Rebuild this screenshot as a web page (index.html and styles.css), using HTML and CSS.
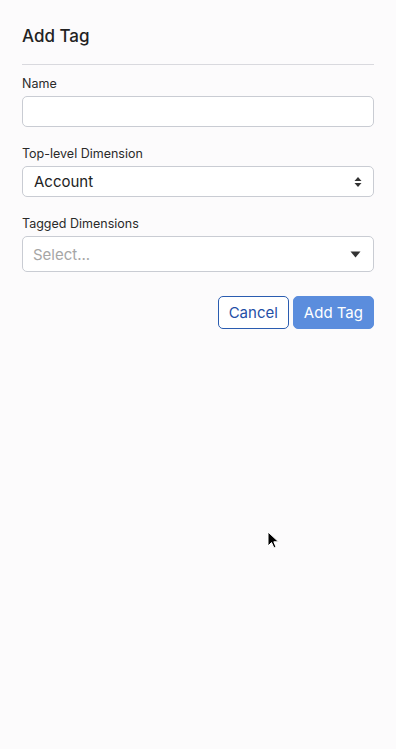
FILE: index.html
```html
<!DOCTYPE html>
<html lang="en">
<head>
    <meta charset="UTF-8">
    <meta name="viewport" content="width=device-width, initial-scale=1.0">
    <title>Add Tag</title>
    <link rel="stylesheet" href="styles.css">
</head>
<body>
    <div class="modal">
        <h2 class="modal-title">Add Tag</h2>

        <div class="field">
            <label class="field-label">Name</label>
            <input class="text-input" type="text">
        </div>

        <div class="field">
            <label class="field-label">Top-level Dimension</label>
            <div class="select-box">
                <span class="select-value">Account</span>
                <svg class="select-arrows" width="8" height="12" viewBox="0 0 8 12">
                    <path d="M4 1 L7.5 5 H0.5 Z" fill="#333"/>
                    <path d="M4 11 L7.5 7 H0.5 Z" fill="#333"/>
                </svg>
            </div>
        </div>

        <div class="field last">
            <label class="field-label">Tagged Dimensions</label>
            <div class="select-box multi">
                <span class="select-placeholder">Select...</span>
                <svg class="select-caret" width="11" height="7" viewBox="0 0 11 7">
                    <path d="M0.5 0.5 H10.5 L5.5 6.5 Z" fill="#333"/>
                </svg>
            </div>
        </div>

        <div class="actions">
            <button class="btn btn-outline">Cancel</button>
            <button class="btn btn-primary">Add Tag</button>
        </div>
    </div>

    <!-- mouse pointer -->
    <svg class="cursor" width="14" height="20" viewBox="0 0 14 20">
        <path d="M1 1 L1 15 L4.5 11.5 L7 17 L9 16 L6.8 10.8 L11.5 10.8 Z" fill="#000" stroke="#fff" stroke-width="1"/>
    </svg>
</body>
</html>
```

FILE: styles.css
```css
* {
    box-sizing: border-box;
    margin: 0;
    padding: 0;
}

body {
    font-family: Inter, 'Noto Sans', sans-serif;
    background: #fcfbfc;
    color: #222;
    min-height: 100vh;
    position: relative;
}

.modal {
    padding: 24px 22px 0 22px;
}

.modal-title {
    font-size: 17px;
    font-weight: 500;
    line-height: 24px;
    color: #222;
    padding-bottom: 16px;
    border-bottom: 1px solid #d9d9de;
    margin-bottom: 11px;
}

.field {
    margin-bottom: 19px;
}

.field.last {
    margin-bottom: 24px;
}

.field-label {
    display: block;
    font-size: 12.5px;
    line-height: 16px;
    color: #2a2a2a;
    margin-bottom: 4px;
}

.text-input {
    display: block;
    width: 100%;
    height: 31px;
    border: 1px solid #c9ccd3;
    border-radius: 5px;
    background: #fff;
    outline: none;
}

.select-box {
    display: flex;
    align-items: center;
    justify-content: space-between;
    height: 31px;
    padding: 0 11px;
    border: 1px solid #c9ccd3;
    border-radius: 5px;
    background: #fff;
}

.select-box.multi {
    height: 36px;
    padding: 0 12px 0 10px;
}

.select-value {
    font-size: 15px;
    color: #222;
}

.select-placeholder {
    font-size: 15px;
    color: #a6a6a6;
}

.actions {
    display: flex;
    justify-content: flex-end;
    gap: 4px;
}

.btn {
    height: 33px;
    border-radius: 5px;
    font-family: Inter, 'Noto Sans', sans-serif;
    font-size: 15px;
    padding: 0 10px;
}

.btn-outline {
    background: #fff;
    border: 1px solid #2a5cb0;
    color: #1f4fa6;
}

.btn-primary {
    background: #5b8ddd;
    border: 1px solid #5b8ddd;
    color: #fff;
}

.cursor {
    position: absolute;
    left: 267px;
    top: 531px;
}
```
